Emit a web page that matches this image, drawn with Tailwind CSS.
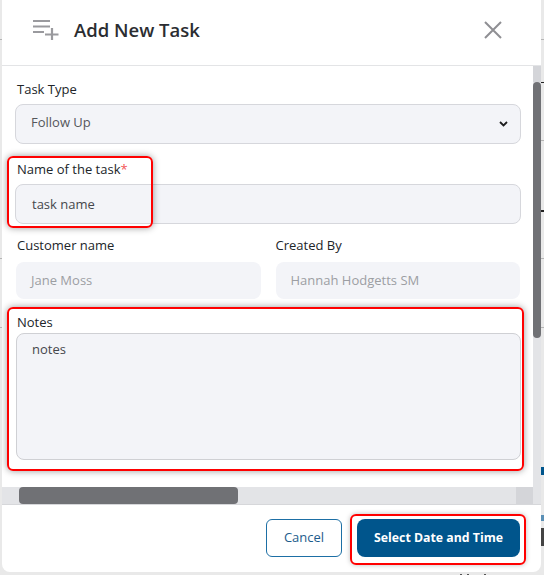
<!DOCTYPE html>
<html>
<head>
<meta charset="utf-8">
<script src="https://cdn.jsdelivr.net/npm/@tailwindcss/browser@4"></script>
</head>
<body class="relative m-0 w-[544px] h-[575px] overflow-hidden bg-[#e9e9e9] font-['Open_Sans',sans-serif] text-[#212529]">
<div class="absolute left-0 top-[39px] w-[2px] h-px bg-[#b5b5b5]"></div>
<div class="absolute left-0 top-[258px] w-[2px] h-px bg-[#b5b5b5]"></div>
<div class="absolute left-0 top-[327px] w-[2px] h-px bg-[#b5b5b5]"></div>
<div class="absolute right-0 top-[39px] w-[3px] h-px bg-[#b5b5b5]"></div>
<div class="absolute right-0 top-[82px] w-[3px] h-px bg-[#222222]"></div>
<div class="absolute right-0 top-[140px] w-[3px] h-px bg-[#b5b5b5]"></div>
<div class="absolute right-0 top-[210px] w-[3px] h-[2px] bg-[#222222]"></div>
<div class="absolute right-0 top-[258px] w-[3px] h-px bg-[#b5b5b5]"></div>
<div class="absolute right-0 top-[327px] w-[3px] h-px bg-[#b5b5b5]"></div>
<div class="absolute right-0 top-[467px] w-[3px] h-[8px] bg-[#00558c]"></div>
<div class="absolute right-0 top-[515px] w-[3px] h-[6px] bg-[#5a8fb5]"></div>
<div class="absolute right-0 top-[528px] w-[3px] h-[18px] bg-[#444444]"></div>
<div class="absolute left-[460px] top-[574px] w-[2px] h-px bg-[#555555]"></div>
<div class="absolute left-[467px] top-[574px] w-[2px] h-px bg-[#555555]"></div>
<div class="absolute left-[484px] top-[574px] w-[2px] h-px bg-[#555555]"></div>
<div class="relative ml-[2px] w-[539px] h-[572px] bg-white rounded-b-[8px] flex flex-col overflow-hidden">
  <header class="h-[66px] shrink-0 border-b border-[#e3e4e6] flex items-center pl-[31px] pr-[39px] pb-[6px]">
    <svg class="w-[26px] h-[22px] text-[#9a9a9e]" viewBox="0 0 26 22" fill="none" stroke="currentColor" stroke-width="2.200"><path d="M0 2H17M0 7.500H17M0 13H11M19 9V21M12 15.500H25.500"/></svg>
    <h1 class="ml-[15px] text-[18.500px] leading-[24px] font-semibold text-[#2b2d31]">Add New Task</h1>
    <svg class="ml-auto w-[18px] h-[18px] text-[#8f8f93]" viewBox="0 0 18 18" fill="none" stroke="currentColor" stroke-width="2"><path d="M1 1L17 17M17 1L1 17"/></svg>
  </header>
  <main class="flex-1 min-h-0 flex">
    <div class="flex-1 min-w-0 flex flex-col">
      <div class="flex-1 min-h-0 pl-[13px] pr-[12px] pt-[14px]">
        <label class="block pl-[2px] text-[13px] leading-[18px] h-[24px]">Task Type</label>
        <div class="h-[40px] rounded-[8px] border border-[#d6d7dc] bg-[#f3f4f8] flex items-center pb-[2px] pl-[15px] pr-[12px] text-[13px] text-[#55575c]">
          <span>Follow Up</span>
          <svg class="ml-auto mt-[2px] w-[9px] h-[6px] text-[#1d1d1f]" viewBox="0 0 9 6" fill="none" stroke="currentColor" stroke-width="1.800"><path d="M1 1L4.500 4.500L8 1"/></svg>
        </div>
        <label class="block mt-[16px] pl-[2px] text-[13px] leading-[18px] h-[24px]">Name of the task<span class="text-[#f25555]">*</span></label>
        <div class="h-[40px] rounded-[8px] border border-[#d6d7dc] bg-[#f3f4f8] flex items-center pt-[2px] pl-[16px] text-[13px] text-[#45474c]">task name</div>
        <div class="mt-[12px] grid grid-cols-2 gap-[15px] pl-[1px] pr-[1px]">
          <div>
            <label class="block pl-[1px] text-[13px] leading-[18px] h-[26px]">Customer name</label>
            <div class="h-[37px] rounded-[8px] bg-[#f3f4f8] flex items-center pl-[15px] text-[13px] text-[#9c9ea3]">Jane Moss</div>
          </div>
          <div>
            <label class="block text-[13px] leading-[18px] h-[26px]">Created By</label>
            <div class="h-[37px] rounded-[8px] bg-[#f3f4f8] flex items-center pl-[15px] text-[13px] text-[#9c9ea3]">Hannah Hodgetts SM</div>
          </div>
        </div>
        <label class="block mt-[14px] pl-[2px] text-[13px] leading-[18px] h-[20px]">Notes</label>
        <div class="ml-[1px] h-[127px] rounded-[8px] border border-[#cfd0d4] bg-[#f3f4f8] pl-[15px] pt-[6px] text-[13px] leading-[18px] text-[#45474c]">notes</div>
      </div>
      <div class="h-[17px] shrink-0 bg-[#e3e4e7] flex">
        <div class="ml-[17px] w-[219px] rounded-[4px] bg-[#707175]"></div>
        <div class="ml-auto w-[17px] bg-[#d4d5d9]"></div>
      </div>
    </div>
    <div class="w-[8px] shrink-0 bg-[#e3e4e7] flex flex-col">
      <div class="h-[16px] bg-[#d4d5d9]"></div>
      <div class="h-[256px] rounded-[4px] bg-[#707175]"></div>
    </div>
  </main>
  <footer class="h-[68px] shrink-0 border-t border-[#d6d7da] flex items-center justify-end pr-[21px] gap-[15px] pb-[2px]">
    <button class="w-[76px] h-[38px] rounded-[6px] border border-[#1d6fa5] bg-white text-[13px] text-[#1d5c8c]">Cancel</button>
    <button class="w-[163px] h-[38px] pt-px rounded-[8px] bg-[#00558c] text-[12.300px] font-bold text-white">Select Date and Time</button>
  </footer>
  <div class="absolute left-[5px] top-[156px] w-[146px] h-[72px] rounded-[6px] border-2 border-[#ff0000] shadow-[0_0_7px_rgba(0,0,0,0.4)]"></div>
  <div class="absolute left-[5px] top-[307px] w-[517px] h-[164px] rounded-[6px] border-2 border-[#ff0000] shadow-[0_0_7px_rgba(0,0,0,0.4)]"></div>
  <div class="absolute left-[348px] top-[514px] w-[176px] h-[51px] rounded-[6px] border-2 border-[#ff0000] shadow-[0_0_5px_rgba(0,0,0,0.25)]"></div>
</div>
</body>
</html>
